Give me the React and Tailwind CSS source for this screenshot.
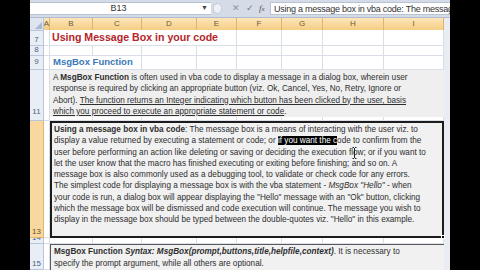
import React from "react";

const grid = "grid grid-cols-[14px_6px_43px_49px_55px_40px_45px_41px_61px_60px_6px]";
const cell = "border-r border-b border-[#d9dee7] bg-white";
const letters = ["A", "B", "C", "D", "E", "F", "G", "H", "I"];

function RowHead({ num, active }) {
  return (
    <div
      className={`flex items-end justify-center overflow-hidden border-r border-b text-[8px] leading-[9px] pb-[1px] ${
        active ? "bg-[#f8d89e] border-[#e2b56a] text-[#6a4d20]" : "bg-[#e9eef6] border-[#b8c6da] text-[#4c5f80]"
      }`}
    >
      {num}
    </div>
  );
}

function EmptyRow({ num, h }) {
  return (
    <div className={`${grid} ${h}`}>
      <RowHead num={num} />
      {letters.map((l) => (
        <div key={l} className={cell} />
      ))}
      <div className="bg-[#e9edf3]" />
    </div>
  );
}

export default function App() {
  return (
    <div className="w-[480px] h-[270px] flex bg-black overflow-hidden font-['Liberation_Sans',Arial,sans-serif]">
      <div className="w-[30px]" />
      <div className="w-[420px] flex flex-col overflow-hidden">
        {/* formula bar */}
        <div className="h-[18px] bg-[#d5dce7] flex pt-[2px] border-b border-[#aebbd0]">
          <div className="w-[181px] h-[13px] bg-white border-y border-[#b7c3d4] flex items-center">
            <span className="flex-1 text-center text-[9px] text-[#333] pl-[6px]">B13</span>
            <span className="text-[7px] text-[#444] pr-[3px]">▼</span>
          </div>
          <div className="w-[59px] h-[13px] flex items-center text-[9px]">
            <div className="w-[9px] h-[11px] ml-[2px] rounded-full border border-[#c2cbd8] bg-[#eef2f7]" />
            <span className="ml-[10px] text-[#8a96a8]">✕</span>
            <span className="ml-[6px] text-[#5a7a8c]">✓</span>
            <span className="ml-[5px] italic font-['Liberation_Serif',serif] text-[#555]">
              f<span className="text-[7px]">x</span>
            </span>
          </div>
          <div className="flex-1 h-[13px] bg-white border-y border-l border-[#b7c3d4] overflow-hidden whitespace-nowrap text-[9px] tracking-[-0.25px] leading-[12px] text-[#333] pl-[3px]">
            Using a message box in vba code: The message box is a means
          </div>
        </div>

        {/* column headers */}
        <div className={`${grid} h-[12px]`}>
          <div className="bg-[#dfe5ee] border-r border-b border-[#b8c6da] relative">
            <div className="absolute right-[1px] bottom-[1px] w-0 h-0 border-l-[7px] border-l-transparent border-b-[7px] border-b-[#a9b8cc]" />
          </div>
          {letters.map((l) => (
            <div
              key={l}
              className="bg-gradient-to-b from-[#fce6ba] to-[#f6cd83] border-r border-b border-[#e0b46a] flex items-center justify-center text-[8px] text-[#6b5a40]"
            >
              {l}
            </div>
          ))}
          <div className="bg-[#e9edf3] border-b border-[#c8d1de]" />
        </div>

        {/* row 7 */}
        <div className={`${grid} h-[16px]`}>
          <RowHead num="7" />
          <div className={cell} />
          <div className={`col-span-4 ${cell} flex items-end pl-[2px] pb-[1px] whitespace-nowrap text-[10.6px] leading-[13px] font-bold text-[#b3262b]`}>
            Using Message Box in your code
          </div>
          <div className={cell} />
          <div className={cell} />
          <div className={cell} />
          <div className={cell} />
          <div className="bg-[#e9edf3]" />
        </div>

        <EmptyRow num="8" h="h-[10px]" />

        {/* row 9 */}
        <div className={`${grid} h-[11px]`}>
          <RowHead num="9" />
          <div className={cell} />
          <div className={`col-span-2 ${cell} flex items-end pl-[3px] whitespace-nowrap text-[9.5px] leading-[11px] font-bold text-[#3b78b8]`}>
            MsgBox Function
          </div>
          {letters.slice(3).map((l) => (
            <div key={l} className={cell} />
          ))}
          <div className="bg-[#e9edf3]" />
        </div>

        <EmptyRow num="10" h="h-[3px]" />

        {/* row 11 */}
        <div className={`${grid} h-[47px]`}>
          <RowHead num="11" />
          <div className={cell} />
          <div className="col-span-8 bg-[#efefef] border-b border-[#d9dee7] pl-[3px] pt-[2px] whitespace-nowrap text-[8.2px] leading-[11.3px] text-[#2e2e2e]">
            <div>
              A <b>MsgBox Function</b> is often used in vba code to display a message in a dialog box, wherein user
            </div>
            <div>response is required by clicking an appropriate button (viz. Ok, Cancel, Yes, No, Retry, Ignore or</div>
            <div>
              Abort). <u>The function returns an Integer indicating which button has been clicked by the user, basis</u>
            </div>
            <div>
              <u>which you proceed to execute an appropriate statement or code</u>.
            </div>
          </div>
          <div className="bg-[#e9edf3]" />
        </div>

        <EmptyRow num="12" h="h-[4px]" />

        {/* row 13 */}
        <div className={`${grid} h-[117px]`}>
          <RowHead num="13" active />
          <div className={cell} />
          <div className="col-span-8 relative bg-[#f1f1f1] border-2 border-[#1c1c1c] pl-[2px] pt-[1px] whitespace-nowrap text-[8.2px] leading-[11.3px] text-[#2e2e2e]">
            <div>
              <b>Using a message box in vba code</b>: The message box is a means of interacting with the user viz. to
            </div>
            <div>
              display a value returned by executing a statement or code; or{" "}
              <span className="bg-black text-white">if you want the c</span>ode to confirm from the
            </div>
            <div>user before performing an action like deleting or saving or deciding the execution flow; or if you want to</div>
            <div>let the user know that the macro has finished executing or exiting before finishing; and so on. A</div>
            <div>message box is also commonly used as a debugging tool, to validate or check code for any errors.</div>
            <div>
              The simplest code for displaying a message box is with the vba statement - <i>MsgBox "Hello"</i> - when
            </div>
            <div>your code is run, a dialog box will appear displaying the "Hello" message with an "Ok" button, clicking</div>
            <div>which the message box will be dismissed and code execution will continue. The message you wish to</div>
            <div>display in the message box should be typed between the double-quotes viz. "Hello" in this example.</div>
            <svg className="absolute left-[300px] top-[24px]" width="5" height="12" viewBox="0 0 5 12">
              <path d="M0.5 0.5h1.5M3 0.5h1.5M2.5 1v10M0.5 11.5h1.5M3 11.5h1.5" stroke="#222" strokeWidth="1" fill="none" />
            </svg>
            <div className="absolute -right-[3px] -bottom-[3px] w-[4px] h-[4px] bg-black border border-white" />
          </div>
          <div className="bg-[#e9edf3]" />
        </div>

        <EmptyRow num="14" h="h-[6px]" />

        {/* row 15 */}
        <div className={`${grid} h-[26px]`}>
          <RowHead num="15" />
          <div className={cell} />
          <div className="col-span-8 bg-[#f1f1f1] border-t border-l border-[#5a5a5a] pl-[3px] pt-[1px] whitespace-nowrap text-[8.2px] leading-[12px] text-[#2e2e2e]">
            <div>
              <b>MsgBox Function</b> <b><i>Syntax: MsgBox(prompt,buttons,title,helpfile,context)</i></b>. It is necessary to
            </div>
            <div>specify the prompt argument, while all others are optional.</div>
          </div>
          <div className="bg-[#e9edf3]" />
        </div>
      </div>
      <div className="w-[30px]" />
    </div>
  );
}
